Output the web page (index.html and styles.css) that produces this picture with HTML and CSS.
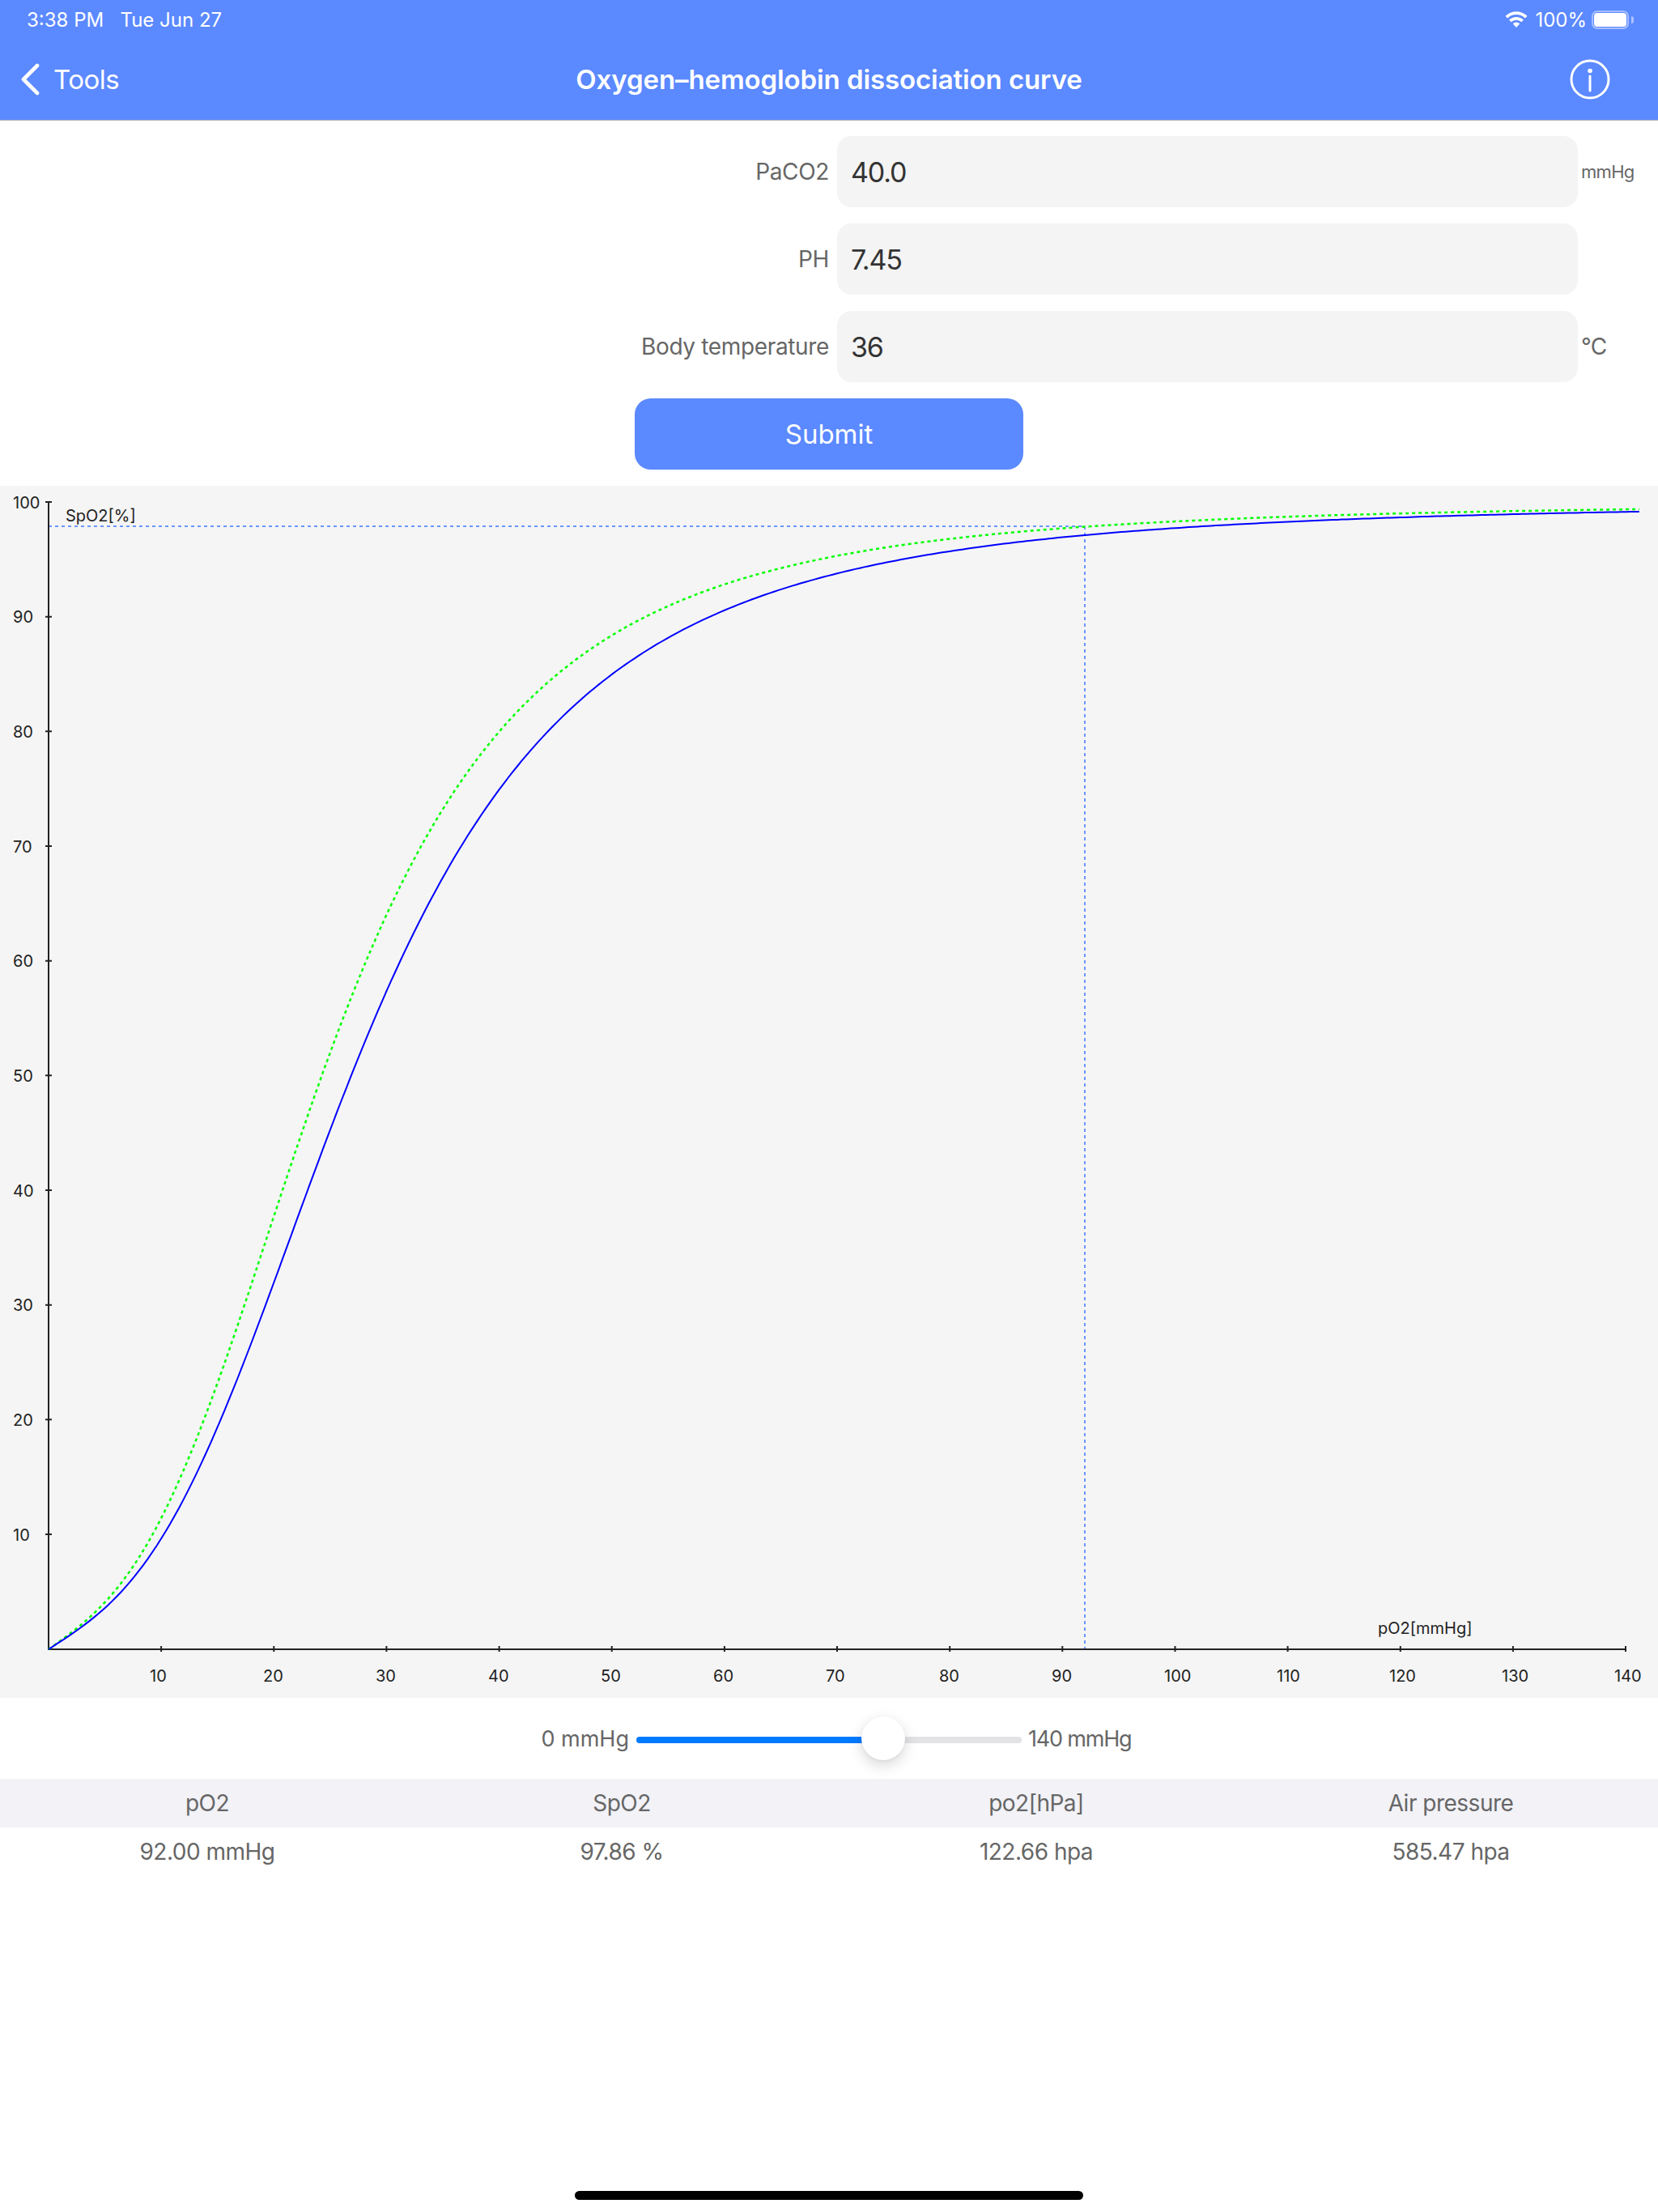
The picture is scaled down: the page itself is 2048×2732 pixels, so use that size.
FILE: index.html
```html
<!DOCTYPE html>
<html lang="en">
<head>
<meta charset="utf-8">
<title>Oxygen–hemoglobin dissociation curve</title>
<link rel="stylesheet" href="styles.css">
</head>
<body>
<header class="header">
  <div class="status">
    <div class="status-time">3:38 PM&nbsp;&nbsp;&nbsp;Tue Jun 27</div>
    <div class="status-right">
      <svg class="wifi" width="28" height="20" viewBox="0 0 28 20"><path d="M14 20l-4.300-4.700a6.200 6.200 0 0 1 8.600 0zM7.600 13.200l-2.500-2.700a12.900 12.900 0 0 1 17.800 0l-2.500 2.700a9.300 9.300 0 0 0-12.800 0zM3.100 8.400L.5 5.700a19.600 19.600 0 0 1 27 0l-2.600 2.700a15.900 15.900 0 0 0-21.800 0z" fill="#fff"/></svg>
      <span class="battery-text">100%</span>
      <div class="battery"><div class="battery-fill"></div></div>
      <div class="battery-nub"></div>
    </div>
  </div>
  <nav class="nav">
    <div class="nav-back">
      <svg class="chevron" width="24" height="40" viewBox="0 0 24 40"><path d="M21 3L4 20l17 17" fill="none" stroke="#fff" stroke-width="4.600" stroke-linecap="round" stroke-linejoin="round"/></svg>
      <span>Tools</span>
    </div>
    <h1 class="nav-title">Oxygen–hemoglobin dissociation curve</h1>
    <div class="nav-info">
      <svg width="50" height="50" viewBox="0 0 50 50"><circle cx="25" cy="25" r="23" fill="none" stroke="#fff" stroke-width="3"/><circle cx="25" cy="14.500" r="2.800" fill="#fff"/><path d="M25 21v18" stroke="#fff" stroke-width="3" stroke-linecap="round"/></svg>
    </div>
  </nav>
</header>

<section class="form">
  <label class="form-label">PaCO2</label><div class="form-input">40.0</div><div class="form-unit form-unit-small">mmHg</div>
  <label class="form-label">PH</label><div class="form-input">7.45</div><div class="form-unit"></div>
  <label class="form-label">Body temperature</label><div class="form-input">36</div><div class="form-unit">°C</div>
</section>
<button class="submit" type="button">Submit</button>

<section class="chart">
  <svg class="chart-svg" width="2048" height="1497" viewBox="0 0 2048 1497">
    <path class="guide" d="M60 50H1340"/>
    <path class="guide" d="M1340 50V1437"/>
    <path class="axis" d="M60 20V1437H2008"/>
    <path class="axis" d="M56 20h8M56 161.700h8M56 303.300h8M56 445h8M56 586.700h8M56 728.300h8M56 870h8M56 1011.700h8M56 1153.300h8M56 1295h8"/>
    <path class="axis" d="M199.100 1433v7M338.300 1433v7M477.400 1433v7M616.600 1433v7M755.700 1433v7M894.900 1433v7M1034 1433v7M1173.200 1433v7M1312.300 1433v7M1451.500 1433v7M1590.600 1433v7M1729.800 1433v7M1868.900 1433v7M2008 1433v7"/>
    <path id="curve-green" class="curve-green"/>
    <path id="curve-blue" class="curve-blue"/>
    <g class="chart-text">
      <text x="16" y="28">100</text>
      <text x="16" y="169">90</text>
      <text x="16" y="311">80</text>
      <text x="16" y="453">70</text>
      <text x="16" y="594">60</text>
      <text x="16" y="736">50</text>
      <text x="16" y="878">40</text>
      <text x="16" y="1019">30</text>
      <text x="16" y="1161">20</text>
      <text x="16" y="1303">10</text>
      <text x="81" y="44">SpO2[%]</text>
      <text x="1702" y="1418">pO2[mmHg]</text>
      <text x="185" y="1477">10</text>
      <text x="325" y="1477">20</text>
      <text x="464" y="1477">30</text>
      <text x="603" y="1477">40</text>
      <text x="742" y="1477">50</text>
      <text x="881" y="1477">60</text>
      <text x="1020" y="1477">70</text>
      <text x="1160" y="1477">80</text>
      <text x="1299" y="1477">90</text>
      <text x="1438" y="1477">100</text>
      <text x="1577" y="1477">110</text>
      <text x="1716" y="1477">120</text>
      <text x="1855" y="1477">130</text>
      <text x="1994" y="1477">140</text>
    </g>
  </svg>
</section>

<section class="slider">
  <div class="slider-min">0 mmHg</div>
  <div class="slider-track">
    <div class="slider-fill"></div>
    <div class="slider-thumb"></div>
  </div>
  <div class="slider-max">140 mmHg</div>
</section>

<section class="table">
  <div class="table-row table-head">
    <div>pO2</div><div>SpO2</div><div>po2[hPa]</div><div>Air pressure</div>
  </div>
  <div class="table-row">
    <div>92.00 mmHg</div><div>97.86 %</div><div>122.66 hpa</div><div>585.47 hpa</div>
  </div>
</section>

<div class="home-bar"></div>
<script src="app.js"></script>
</body>
</html>
```

FILE: styles.css
```css
* { box-sizing: border-box; }
html, body { margin: 0; padding: 0; }
body {
  width: 2048px;
  height: 2732px;
  display: flex;
  flex-direction: column;
  overflow: hidden;
  background: #fff;
  font-family: Inter, "Liberation Sans", sans-serif;
  color: #666;
}

.header { height: 149px; background: #5b89ff; border-bottom: 1px solid #b2b2b2; color: #fff; flex: none; }
.status { height: 48px; display: flex; justify-content: space-between; align-items: center; padding: 0 30px 0 33px; font-size: 24px; }
.status-right { display: flex; align-items: center; }
.wifi { margin-right: 9px; }
.battery-text { margin-right: 6px; }
.battery { width: 46px; height: 23px; border: 2px solid rgba(255,255,255,.45); border-radius: 7px; padding: 1px; }
.battery-fill { width: 100%; height: 100%; background: #fff; border-radius: 4px; }
.battery-nub { width: 3px; height: 9px; margin-left: 3px; background: rgba(255,255,255,.5); border-radius: 0 3px 3px 0; }

.nav { height: 100px; display: grid; grid-template-columns: 1fr auto 1fr; align-items: center; padding: 0 59px; }
.nav-back { display: flex; align-items: center; gap: 17px; margin-left: -34px; font-size: 33px; letter-spacing: -0.5px; }
.nav-title { margin: 0; font-size: 33px; font-weight: 600; letter-spacing: -0.1px; }
.nav-info { display: flex; justify-content: flex-end; }

.form { display: grid; grid-template-columns: 1fr 915px 99px; row-gap: 20px; padding-top: 19px; flex: none; }
.form-label { height: 88px; display: flex; align-items: center; justify-content: flex-end; padding-right: 10px; font-size: 28px; letter-spacing: -0.35px; }
.form-input { height: 88px; display: flex; align-items: center; padding-left: 17px; background: #f4f4f4; border-radius: 18px; font-size: 34px; letter-spacing: -1.2px; color: #333; }
.form-unit { height: 88px; display: flex; align-items: center; padding-left: 4px; font-size: 28px; letter-spacing: -0.6px; }
.form-unit-small { font-size: 22px; letter-spacing: -0.7px; }

.submit { flex: none; align-self: center; width: 480px; height: 88px; margin-top: 20px; border: 0; border-radius: 20px; background: #5b89ff; color: #fff; font: inherit; font-size: 33px; }

.chart { flex: none; height: 1497px; margin-top: 20px; background: #f5f5f5; }
.chart-svg { display: block; }
.chart-text { font-size: 20px; fill: #222; }
.axis { fill: none; stroke: #222; stroke-width: 2; }
.guide { fill: none; stroke: #6b95ff; stroke-width: 2; stroke-dasharray: 4 4; }
.curve-green { fill: none; stroke: #00ff00; stroke-width: 2.500; stroke-dasharray: 4 4; }
.curve-blue { fill: none; stroke: #0000ff; stroke-width: 2; }

.slider { flex: none; height: 100px; display: grid; grid-template-columns: 1fr 476px 1fr; align-items: center; font-size: 27px; }
.slider-min { text-align: right; padding-right: 9px; }
.slider-max { padding-left: 8px; letter-spacing: -1.2px; }
.slider-track { position: relative; height: 8px; margin-top: 4px; background: #e3e3e6; border-radius: 4px; }
.slider-fill { width: 290px; height: 100%; background: #007aff; border-radius: 4px; }
.slider-thumb { position: absolute; left: 278px; top: -25px; width: 54px; height: 54px; border-radius: 50%; background: #fff; box-shadow: 0 6px 18px rgba(0,0,0,.16), 0 1px 3px rgba(0,0,0,.06); }

.table { flex: none; position: relative; }
.table-row { height: 60px; display: grid; grid-template-columns: repeat(4, 1fr); align-items: center; text-align: center; font-size: 28px; letter-spacing: -0.5px; }
.table-head { background: #f2f2f7; }

.home-bar { flex: none; align-self: center; width: 628px; height: 11px; margin-top: auto; margin-bottom: 15px; background: #000; border-radius: 6px; }
```

FILE: app.js
```js
// Severinghaus saturation curve, drawn on the chart's axes.
var X0 = 60, XS = 13.915, Y0 = 1437, YS = 14.167, STEPS = 353;
function sat(p) {
  return p <= 0 ? 0 : 100 / (23400 / (p * p * p + 150 * p) + 1);
}
function curve(factor) {
  var d = "";
  for (var i = 0; i <= STEPS; i++) {
    var p = i * 0.4;
    var x = X0 + p * XS;
    var y = Y0 - sat(p * factor) * YS;
    d += (i === 0 ? "M" : "L") + x.toFixed(1) + " " + y.toFixed(1);
  }
  return d;
}
document.getElementById("curve-blue").setAttribute("d", curve(1));
document.getElementById("curve-green").setAttribute("d", curve(1.1075));
```
